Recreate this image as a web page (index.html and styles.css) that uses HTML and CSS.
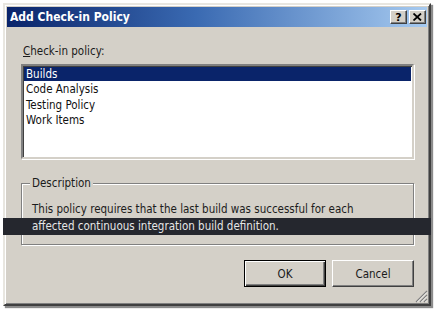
FILE: index.html
```html
<!DOCTYPE html>
<html>
<head>
<meta charset="utf-8">
<link rel="stylesheet" href="styles.css">
</head>
<body>
<div class="dialog">
  <div class="titlebar">
    <span class="title">Add Check-in Policy</span>
    <div class="caption-buttons">
      <span class="cbtn help">?</span>
      <span class="cbtn close"><svg width="9" height="8" viewBox="0 0 9 8"><path d="M0.5 0.5 L8 7.5 M8 0.5 L0.5 7.5" stroke="#000" stroke-width="1.8"/></svg></span>
    </div>
  </div>
  <div class="body">
    <div class="label"><u>C</u>heck-in policy:</div>
    <div class="listbox">
      <div class="item selected">Builds</div>
      <div class="item">Code Analysis</div>
      <div class="item">Testing Policy</div>
      <div class="item">Work Items</div>
    </div>
    <div class="group">
      <div class="legend">Description</div>
      <div class="desc">
        <div class="line">This policy requires that the last build was successful for each</div>
        <div class="line band">affected continuous integration build definition.</div>
      </div>
    </div>
    <div class="buttons">
      <div class="btn default"><span>OK</span></div>
      <div class="btn"><span>Cancel</span></div>
    </div>
  </div>
  <svg class="grip" width="13" height="13" viewBox="0 0 13 13">
    <path d="M12 1 L1 12 M12 5 L5 12 M12 9 L9 12" stroke="#808080" stroke-width="1.2"/>
    <path d="M12 2.4 L2.4 12 M12 6.4 L6.4 12 M12 10.4 L10.4 12" stroke="#fff" stroke-width="0.8"/>
  </svg>
</div>
</body>
</html>
```

FILE: styles.css
```css
html, body {
  margin: 0;
  padding: 0;
  background: #fff;
  width: 436px;
  height: 311px;
  overflow: hidden;
}
body {
  font-family: "DejaVu Sans Condensed", "DejaVu Sans", sans-serif;
  font-size: 11.5px;
  color: #000;
}
.dialog {
  position: relative;
  box-sizing: border-box;
  margin: 3px 0 0 3px;
  width: 428px;
  height: 303px;
  background: #d4d0c8;
  border: 2px solid;
  border-color: #e8e6e0 #404040 #404040 #e8e6e0;
  box-shadow: inset 1px 1px 0 #fff, inset -1px -1px 0 #808080, 2px 2px 1px rgba(0,0,0,0.45);
  padding: 2px;
  display: flex;
  flex-direction: column;
}
.titlebar {
  height: 20px;
  flex: none;
  background: linear-gradient(to right, #0a246a 0%, #3a6ab2 45%, #a6caf0 100%);
  display: flex;
  align-items: center;
  justify-content: space-between;
  padding: 0 1px 0 3px;
}
.title {
  color: #fff;
  font-weight: bold;
  font-size: 12px;
}
.caption-buttons {
  display: flex;
  gap: 2px;
}
.cbtn {
  box-sizing: border-box;
  width: 17px;
  height: 14px;
  background: #d4d0c8;
  border: 1px solid;
  border-color: #fff #404040 #404040 #fff;
  box-shadow: inset -1px -1px 0 #808080;
  display: flex;
  align-items: center;
  justify-content: center;
  font-weight: bold;
  font-size: 11px;
  line-height: 1;
  font-family: "DejaVu Sans", sans-serif;
}
.body {
  flex: 1;
  padding: 17px 13px 0 14px;
  display: flex;
  flex-direction: column;
}
.label {
  line-height: 14px;
  margin-left: 2px;
  color: #1a1a1a;
}
.label u {
  text-decoration-thickness: 1px;
}
.listbox {
  margin-top: 6px;
  box-sizing: border-box;
  height: 95px;
  background: #fff;
  border: 2px solid;
  border-color: #808080 #d4d0c8 #d4d0c8 #808080;
  box-shadow: inset 1px 1px 0 #404040, 1px 1px 0 #fff;
  padding: 1px 1px 0 1px;
}
.item {
  line-height: 15.3px;
  height: 15.3px;
  padding-left: 2px;
  color: #111;
}
.item.selected {
  background: #0a246a;
  color: #fff;
  height: 14px;
  line-height: 14px;
  margin-bottom: 1.3px;
}
.group {
  margin-top: 24px;
  border: 1px solid #808080;
  box-shadow: 1px 1px 0 #fff, inset 1px 1px 0 #fff;
  padding: 0 9px 9px 10px;
}
.legend {
  width: max-content;
  margin: -8px 0 0 -2px;
  padding: 0 2px;
  background: #d4d0c8;
  line-height: 14px;
  color: #1a1a1a;
}
.desc {
  margin-top: 11px;
}
.line {
  line-height: 16px;
  color: #1c1c1c;
  white-space: nowrap;
}
.band {
  line-height: 17px;
  margin-top: 1px;
  background: #25272e;
  color: #e6e6e6;
  margin-left: -29px;
  margin-right: -27px;
  padding-left: 29px;
}
.buttons {
  margin-top: 15px;
  display: flex;
  justify-content: flex-end;
  gap: 6px;
}
.btn {
  box-sizing: border-box;
  width: 82px;
  height: 27px;
  background: #d4d0c8;
  border: 1px solid;
  border-color: #fff #404040 #404040 #fff;
  box-shadow: inset -1px -1px 0 #808080;
  display: flex;
  align-items: center;
  justify-content: center;
  color: #1a1a1a;
}
.btn.default {
  border: 1px solid #000;
  box-shadow: inset 1px 1px 0 #fff, inset -1px -1px 0 #404040, inset -2px -2px 0 #808080;
}
.grip {
  position: absolute;
  right: 1px;
  bottom: 1px;
}
```
